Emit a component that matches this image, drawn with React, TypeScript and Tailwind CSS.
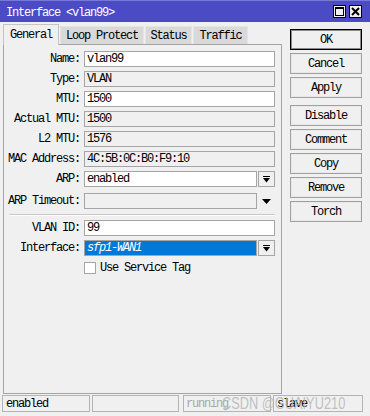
import React from "react";

const font = "font-['Liberation_Mono',monospace] text-[12px] tracking-[-1.2px]";

function DropIcon() {
  return (
    <svg width="7" height="7" viewBox="0 0 7 7">
      <rect x="0" y="0" width="7" height="1" fill="#000" />
      <path d="M0 2h7L3.5 6.5z" fill="#000" />
    </svg>
  );
}

function Row({ label, children, className = "" }: { label: string; children: React.ReactNode; className?: string }) {
  return (
    <div className={`flex h-[16px] items-center ${className}`}>
      <div className="w-[77px] pr-px text-right leading-none">{label}</div>
      <div className="ml-[3px] flex h-full">{children}</div>
    </div>
  );
}

function Field({ value, editable = false, w = "w-[191px]" }: { value: string; editable?: boolean; w?: string }) {
  return (
    <div
      className={`${w} flex h-full items-center border border-[#a5a5a5] pl-[2px] leading-none ${
        editable ? "bg-white" : "bg-[#f0f0f0]"
      }`}
    >
      {value}
    </div>
  );
}

function DropButton() {
  return (
    <div className="ml-px flex h-full w-[17px] items-center justify-center border border-[#a5a5a5] bg-[#f0f0f0]">
      <DropIcon />
    </div>
  );
}

const buttons = ["OK", "Cancel", "Apply", "Disable", "Comment", "Copy", "Remove", "Torch"];
const tabs = [
  { name: "Loop Protect", w: "w-[84px]" },
  { name: "Status", w: "w-[47px]" },
  { name: "Traffic", w: "w-[55px]" },
];

export default function App() {
  return (
    <div className={`relative flex h-[416px] w-[370px] flex-col overflow-hidden bg-[#f0f0f0] text-black ${font}`}>
      {/* title bar */}
      <div className="flex h-[22px] items-center justify-between border-t border-[#7878d8] bg-[#4b4bc6] pl-[6px] pr-[8px] text-white">
        <span className="pt-[2px] leading-none">Interface &lt;vlan99&gt;</span>
        <div className="flex gap-[3px]">
          <div className="flex h-[13px] w-[13px] items-center justify-center border border-black bg-[#f0f0f0]">
            <svg width="9" height="9" viewBox="0 0 9 9">
              <rect x="0.5" y="0.5" width="8" height="8" fill="none" stroke="#000" />
              <rect x="0" y="0" width="9" height="2" fill="#000" />
            </svg>
          </div>
          <div className="flex h-[13px] w-[13px] items-center justify-center border border-black bg-[#f0f0f0]">
            <svg width="9" height="9" viewBox="0 0 9 9">
              <path d="M1 1L8 8M8 1L1 8" stroke="#000" strokeWidth="2" />
            </svg>
          </div>
        </div>
      </div>

      <div className="flex pt-[2px]">
        {/* left: tabs + panel */}
        <div className="ml-[3px] flex w-[279px] flex-col">
          <div className="flex h-[20px] items-end gap-px">
            <div className="relative z-10 -mb-px flex h-[21px] w-[56px] items-center justify-center border border-b-0 border-[#c4c4c4] bg-[#f0f0f0] leading-none">
              General
            </div>
            {tabs.map((t) => (
              <div
                key={t.name}
                className={`flex h-[18px] ${t.w} items-center justify-center border border-b-0 border-[#e4e4e4] bg-[#d9d9d9] pt-[1px] leading-none`}
              >
                {t.name}
              </div>
            ))}
          </div>
          <div className="flex h-[350px] flex-col border border-[#a5a5a5] pt-[6px]">
            <div className="flex flex-col gap-[4px]">
              <Row label="Name:">
                <Field value="vlan99" editable />
              </Row>
              <Row label="Type:">
                <Field value="VLAN" />
              </Row>
              <Row label="MTU:">
                <Field value="1500" editable />
              </Row>
              <Row label="Actual MTU:">
                <Field value="1500" />
              </Row>
              <Row label="L2 MTU:">
                <Field value="1576" />
              </Row>
              <Row label="MAC Address:">
                <Field value="4C:5B:0C:B0:F9:10" />
              </Row>
              <Row label="ARP:">
                <Field value="enabled" editable w="w-[173px]" />
                <DropButton />
              </Row>
            </div>
            <Row label="ARP Timeout:" className="mt-[6px]">
              <Field value="" w="w-[173px]" />
              <div className="flex w-[18px] items-center justify-center">
                <svg width="9" height="5" viewBox="0 0 9 5">
                  <path d="M0 0h9L4.5 5z" fill="#000" />
                </svg>
              </div>
            </Row>
            <div className="ml-[5px] mt-[5px] h-0 w-[266px] border-t border-[#c8c8c8] border-b border-b-white" />
            <div className="mt-[4px] flex flex-col gap-[4px]">
              <Row label="VLAN ID:">
                <Field value="99" editable />
              </Row>
              <Row label="Interface:">
                <div className="flex h-full w-[173px] items-center border border-[#a5a5a5] bg-[#0078d7] pl-[2px] italic leading-none text-white">
                  sfp1-WAN1
                </div>
                <DropButton />
              </Row>
            </div>
            <div className="ml-[80px] mt-[6px] flex items-center gap-[4px]">
              <div className="h-[12px] w-[12px] border border-[#a5a5a5] bg-white" />
              <span className="leading-none">Use Service Tag</span>
            </div>
          </div>
        </div>

        {/* right: buttons */}
        <div className="ml-[8px] flex w-[72px] flex-col gap-[3px] pt-[5px]">
          {buttons.map((b) => (
            <div
              key={b}
              className={`flex h-[21px] items-center justify-center bg-[#f0f0f0] leading-none ${
                b === "OK"
                  ? "border border-black shadow-[inset_0_0_0_1px_#8a8a8a]"
                  : "border border-[#a0a0a0] shadow-[inset_0_0_0_1px_#e8e8e8]"
              } ${b === "Disable" ? "mt-[4px]" : ""}`}
            >
              {b}
            </div>
          ))}
        </div>
      </div>

      {/* status bar */}
      <div className="ml-[2px] mt-px flex h-[17px]">
        <div className="flex w-[88px] items-center border border-[#b4b4b4] pl-[3px] leading-none">enabled</div>
        <div className="ml-[2px] w-[87px] border border-[#b4b4b4]" />
        <div className="ml-[4px] flex w-[88px] items-center border border-[#b4b4b4] pl-[2px] leading-none text-[#a8a8a8]">
          running
        </div>
        <div className="ml-[2px] flex w-[90px] items-center border border-[#b4b4b4] pl-[3px] leading-none">slave</div>
      </div>

      {/* watermark */}
      <div className="pointer-events-none absolute left-[222px] top-[392px] origin-left scale-x-[0.8] font-['Liberation_Sans',sans-serif] text-[16px] tracking-normal whitespace-nowrap text-[#b9b9b9]/90">
        CSDN @GUAIYU210
      </div>
    </div>
  );
}
